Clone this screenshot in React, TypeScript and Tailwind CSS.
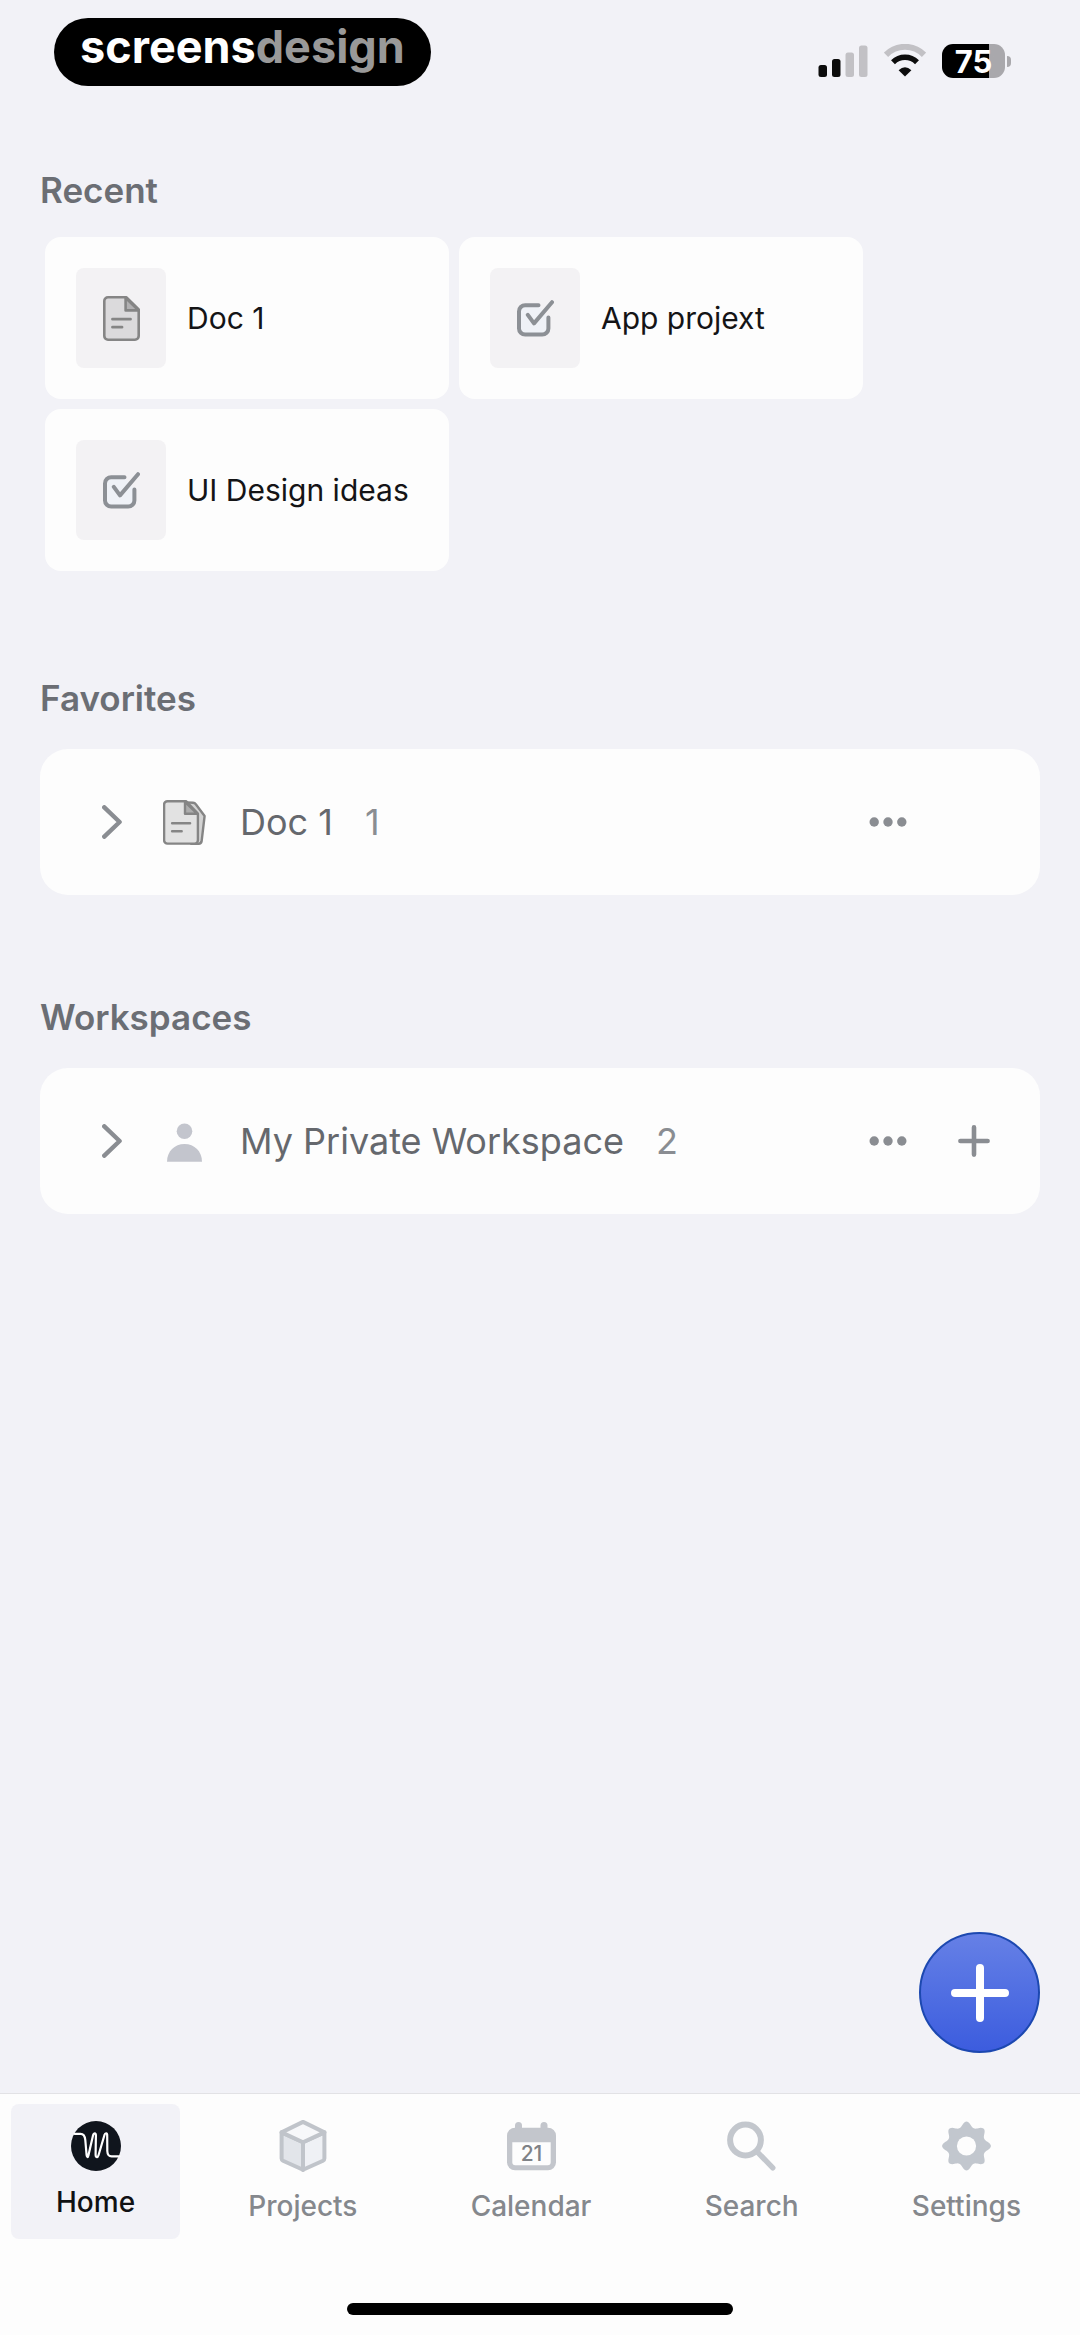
import React from 'react';

type RecentItem = { id: string; title: string; kind: 'doc' | 'task' };

const RECENT: RecentItem[] = [
    { id: 'r1', title: 'Doc 1', kind: 'doc' },
    { id: 'r2', title: 'App projext', kind: 'task' },
    { id: 'r3', title: 'UI Design ideas', kind: 'task' },
];

// Outline of the settings gear: eight soft teeth around a circle
const GEAR_POINTS = Array.from({ length: 160 }, (_, i) => {
    const a = (i / 160) * Math.PI * 2;
    const r = 19.2 + 5.2 * Math.pow((1 + Math.cos(8 * a)) / 2, 1.25);
    return `${(24.5 + r * Math.sin(a)).toFixed(2)},${(27 - r * Math.cos(a)).toFixed(2)}`;
}).join(' ');

function DocIcon() {
    return (
        <svg width="37" height="45" viewBox="0 0 37 45" stroke="#858585" strokeWidth="2.6" strokeLinecap="round" strokeLinejoin="round" aria-hidden="true">
            <path d="M5 1.3H23.5L35.7 13.5V40a3.7 3.7 0 0 1-3.7 3.7H5A3.7 3.7 0 0 1 1.3 40V5A3.7 3.7 0 0 1 5 1.3Z" fill="#dbdadc" />
            <path d="M22.6 1.8V14.4H35.4Z" fill="#b1b0b2" />
            <path d="M9.5 23.2H27.5M9.5 31.2H19" fill="none" strokeWidth="2.8" />
        </svg>
    );
}

function DocStackIcon() {
    return (
        <svg width="43" height="45" viewBox="0 0 43 45" stroke="#858585" strokeWidth="2.4" strokeLinecap="round" strokeLinejoin="round" aria-hidden="true">
            <path d="M23 2.4L30 2.8Q31.8 2.9 33 4.5L41.6 16L38.6 41.3Q38.2 43.7 35.8 43.7H28Z" fill="#d3d3d3" />
            <path d="M4.5 1.2H23L34.9 13.5V40.2a3.4 3.4 0 0 1-3.4 3.4H4.5a3.4 3.4 0 0 1-3.4-3.4V4.6A3.4 3.4 0 0 1 4.5 1.2Z" fill="#e2e2e2" />
            <path d="M22 1.8V13.8H34.4Z" fill="#adadad" />
            <path d="M9.2 23.2H27M9.2 31.2H18.6" fill="none" strokeWidth="2.6" />
        </svg>
    );
}

function TaskIcon() {
    return (
        <svg width="37" height="37" viewBox="0 0 37 37" fill="none" stroke="#8c9095" strokeWidth="4" strokeLinecap="round" strokeLinejoin="round" aria-hidden="true">
            <path d="M21.5 5.2H8.2A6.2 6.2 0 0 0 2 11.4V28.4A6.2 6.2 0 0 0 8.2 34.6H25.2A6.2 6.2 0 0 0 31.4 28.4V17.6" fill="#eff2f7" />
            <path d="M10.8 14.8L17 23.4L35 2.2" />
        </svg>
    );
}

function PersonIcon() {
    return (
        <svg width="43" height="45" viewBox="0 0 43 45" fill="#c3c5cd" aria-hidden="true">
            <circle cx="21.5" cy="12.3" r="7.8" />
            <path d="M4 42.7C4 32.5 11.5 25 21.5 25S39 32.5 39 42.7Z" />
        </svg>
    );
}

function ChevronIcon() {
    return (
        <svg width="20" height="34" viewBox="0 0 20 34" fill="none" stroke="#8a8d92" strokeWidth="4.4" strokeLinecap="round" strokeLinejoin="round" aria-hidden="true">
            <path d="M2.3 2.3L17.6 17L2.3 31.7" />
        </svg>
    );
}

function DotsIcon() {
    return (
        <svg width="38" height="10" viewBox="0 0 38 10" fill="#8a8d92" aria-hidden="true">
            <circle cx="5.2" cy="5" r="4.7" />
            <circle cx="19" cy="5" r="4.7" />
            <circle cx="32.8" cy="5" r="4.7" />
        </svg>
    );
}

function HomeIcon() {
    return (
        <svg width="50" height="52" viewBox="0 0 50 52" aria-hidden="true">
            <circle cx="25" cy="27" r="25" fill="#10151d" />
            <path
                d="M3.5 14.8H9.5C13.4 14.8 14 17.5 14.3 21L15.6 36.2C15.9 38.8 16.9 38.7 17.4 36.4L22 16.4C22.8 13.4 24.9 13.8 24.9 16.4L24.6 35.8C24.7 38.8 26.7 38.8 27.5 36.2L33.4 16.2C34.3 13.4 36.3 13.8 36.2 16.4L36.3 32C36.5 36.2 37.8 37.3 40.6 37.3H48.5"
                fill="none"
                stroke="#ffffff"
                strokeWidth="2.2"
                strokeLinecap="round"
                strokeLinejoin="round"
            />
        </svg>
    );
}

function ProjectsIcon() {
    return (
        <svg width="48" height="56" viewBox="0 0 48 56" stroke="#c0c4ca" strokeWidth="4" strokeLinejoin="round" aria-hidden="true">
            <path d="M24 23.3L2.6 13.4V39.6Q2.6 41 4 41.7L24 50.8Z" fill="#e2e5ea" />
            <path d="M24 23.3L45.4 13.4V39.6Q45.4 41 44 41.7L24 50.8Z" fill="#eff1f5" />
            <path d="M24 2.9L45.4 13.4L24 23.3L2.6 13.4Z" fill="#f7f8fa" />
        </svg>
    );
}

function CalendarIcon() {
    return (
        <svg width="49" height="56" viewBox="0 0 49 56" aria-hidden="true">
            <rect x="8" y="3" width="7" height="14" rx="3.5" fill="#c3c6cc" />
            <rect x="33.5" y="3" width="7" height="14" rx="3.5" fill="#c3c6cc" />
            <rect x="0" y="8.7" width="49" height="42.6" rx="8" fill="#c3c6cc" />
            <path d="M5.3 23.3H43.7V43.3A3 3 0 0 1 40.7 46.3H8.3A3 3 0 0 1 5.3 43.3Z" fill="#fdfdfd" />
            <text x="24.5" y="42" textAnchor="middle" fontSize="21" fontWeight="500" fill="#7f8287">21</text>
        </svg>
    );
}

function SearchIcon() {
    return (
        <svg width="49" height="56" viewBox="0 0 49 56" fill="none" stroke="#c3c7cd" strokeLinecap="round" aria-hidden="true">
            <circle cx="18.5" cy="21" r="15.4" strokeWidth="6" />
            <path d="M30 32.6L45.8 48.8" strokeWidth="5.4" />
        </svg>
    );
}

function SettingsIcon() {
    return (
        <svg width="49" height="56" viewBox="0 0 49 56" aria-hidden="true">
            <polygon points={GEAR_POINTS} fill="#c2c7ce" />
            <circle cx="24.5" cy="27" r="9.6" fill="#fdfdfd" />
        </svg>
    );
}

const TABS = [
    { id: 'home', label: 'Home', icon: <HomeIcon />, active: true },
    { id: 'projects', label: 'Projects', icon: <ProjectsIcon />, active: false },
    { id: 'calendar', label: 'Calendar', icon: <CalendarIcon />, active: false },
    { id: 'search', label: 'Search', icon: <SearchIcon />, active: false },
    { id: 'settings', label: 'Settings', icon: <SettingsIcon />, active: false },
];

function StatusBar() {
    return (
        <header className="flex items-end justify-between pt-[18px] pl-[54px] pr-[69px]">
            <div className="flex h-[68px] items-center rounded-full bg-black px-[26px] pb-3 text-[45px] leading-none font-bold text-white">
                screens<span className="text-[#999999]">design</span>
            </div>
            <div className="flex h-[34px] items-end gap-4 mb-2">
                <svg width="50" height="34" viewBox="0 0 50 34" aria-label="Signal">
                    <rect x="0.5" y="21" width="8.5" height="12" rx="2.5" fill="#0c0c0c" />
                    <rect x="14" y="15" width="8.5" height="18" rx="2.5" fill="#0c0c0c" />
                    <rect x="27.5" y="8.5" width="8.5" height="24.5" rx="2.5" fill="#c2c1c5" />
                    <rect x="41" y="1.5" width="8.5" height="31.5" rx="2.5" fill="#c2c1c5" />
                </svg>
                <svg width="42" height="34" viewBox="0 0 42 34" fill="none" aria-label="Wi-Fi">
                    <path d="M2 10.8A26.6 26.6 0 0 1 40 10.8" stroke="#c2c1c5" strokeWidth="6" />
                    <path d="M9 18.2A17.2 17.2 0 0 1 33 18.2" stroke="#0c0c0c" strokeWidth="5.6" />
                    <path d="M21 32.4L14.6 26.2Q21 20.2 27.4 26.2Z" fill="#0c0c0c" />
                </svg>
                <div className="flex h-[34px] items-center gap-0.5">
                    <div className="flex h-[34px] w-[63px] items-center justify-center rounded-[11px] bg-linear-to-r from-black from-75% to-[#a9a8ac] to-75% text-[31px] leading-none font-bold text-white">
                        75
                    </div>
                    <div className="h-[11px] w-1 rounded-r-full bg-[#a9a8ac]" />
                </div>
            </div>
        </header>
    );
}

interface ListRowProps {
    title: string;
    count: number;
    icon: React.ReactNode;
    canAdd?: boolean;
}

function ListRow({ title, count, icon, canAdd = false }: ListRowProps) {
    return (
        <div className="flex h-[146px] items-center rounded-[28px] bg-[#fdfdfd] pl-[52px] pr-[38px]">
            <button type="button" aria-label={`Expand ${title}`} className="flex h-14 w-10 items-center justify-center">
                <ChevronIcon />
            </button>
            <a href="#" className="ml-[31px] flex flex-1 items-center text-[36px] text-[#65686d]">
                {icon}
                <span className="ml-[34px]">{title}</span>
                <span className="ml-8 text-[#8a8d92]">{count}</span>
            </a>
            <div className="flex items-center gap-[30px]">
                <button type="button" aria-label={`More options for ${title}`} className="flex h-14 w-14 items-center justify-center">
                    <DotsIcon />
                </button>
                {canAdd ? (
                    <button type="button" aria-label={`Add to ${title}`} className="flex h-14 w-14 items-center justify-center">
                        <svg width="32" height="32" viewBox="0 0 32 32" stroke="#8a8d92" strokeWidth="4.6" strokeLinecap="round" aria-hidden="true">
                            <path d="M16 2.4V29.6M2.4 16H29.6" />
                        </svg>
                    </button>
                ) : (
                    <div className="h-14 w-14" />
                )}
            </div>
        </div>
    );
}

function TabBar() {
    return (
        <footer className="border-t border-[#e2e2e5] bg-[#fdfdfd] pb-5">
            <nav className="flex h-[209px] items-start justify-between pt-2.5 pl-[11px] pr-3.5">
                {TABS.map((tab) => (
                    <a
                        key={tab.id}
                        href="#"
                        className={`flex h-[135px] flex-col items-center gap-3 rounded-lg px-[45px] pt-[15px] text-[28px] leading-[38px] font-medium ${tab.active ? 'bg-[#f2f2f7] text-[#101113]' : 'text-[#85888d]'}`}
                    >
                        {tab.icon}
                        {tab.label}
                    </a>
                ))}
            </nav>
            <div className="mx-auto h-3 w-[386px] rounded-full bg-black" />
        </footer>
    );
}

export default function App() {
    return (
        <div className="flex min-h-screen flex-col bg-[#f2f2f7] font-['Inter','Liberation_Sans',sans-serif]">
            <StatusBar />

            <main className="relative flex flex-1 flex-col gap-[102px] px-10 pt-[84px] pb-[200px]">
                <section>
                    <h2 className="mb-[22px] text-[35px] leading-10 font-semibold text-[#6b6e74]">Recent</h2>
                    <div className="flex flex-wrap gap-2.5 p-[5px]">
                        {RECENT.map((item) => (
                            <a key={item.id} href="#" className="flex h-[162px] w-[404px] items-center rounded-2xl bg-[#fdfdfd] px-[31px]">
                                <div className="flex h-[100px] w-[90px] items-center justify-center rounded-lg bg-[#f3f2f4]">
                                    {item.kind === 'doc' ? <DocIcon /> : <TaskIcon />}
                                </div>
                                <span className="ml-[21px] text-[30px] whitespace-nowrap text-[#141416]">{item.title}</span>
                            </a>
                        ))}
                    </div>
                </section>

                <section>
                    <h2 className="mb-[31px] text-[35px] leading-10 font-semibold text-[#6b6e74]">Favorites</h2>
                    <ListRow title="Doc 1" count={1} icon={<DocStackIcon />} />
                </section>

                <section>
                    <h2 className="mb-[31px] text-[35px] leading-10 font-semibold text-[#6b6e74]">Workspaces</h2>
                    <ListRow title="My Private Workspace" count={2} icon={<PersonIcon />} canAdd />
                </section>

                {/* Floating create button */}
                <button
                    type="button"
                    aria-label="Create"
                    className="absolute right-10 bottom-10 flex h-[121px] w-[121px] items-center justify-center rounded-full border-2 border-[#1c48b0] bg-linear-to-b from-[#6680e6] to-[#3c5cde]"
                >
                    <svg width="58" height="58" viewBox="0 0 58 58" stroke="#ffffff" strokeWidth="8" strokeLinecap="round" aria-hidden="true">
                        <path d="M29 4V54M4 29H54" />
                    </svg>
                </button>
            </main>

            <TabBar />
        </div>
    );
}
